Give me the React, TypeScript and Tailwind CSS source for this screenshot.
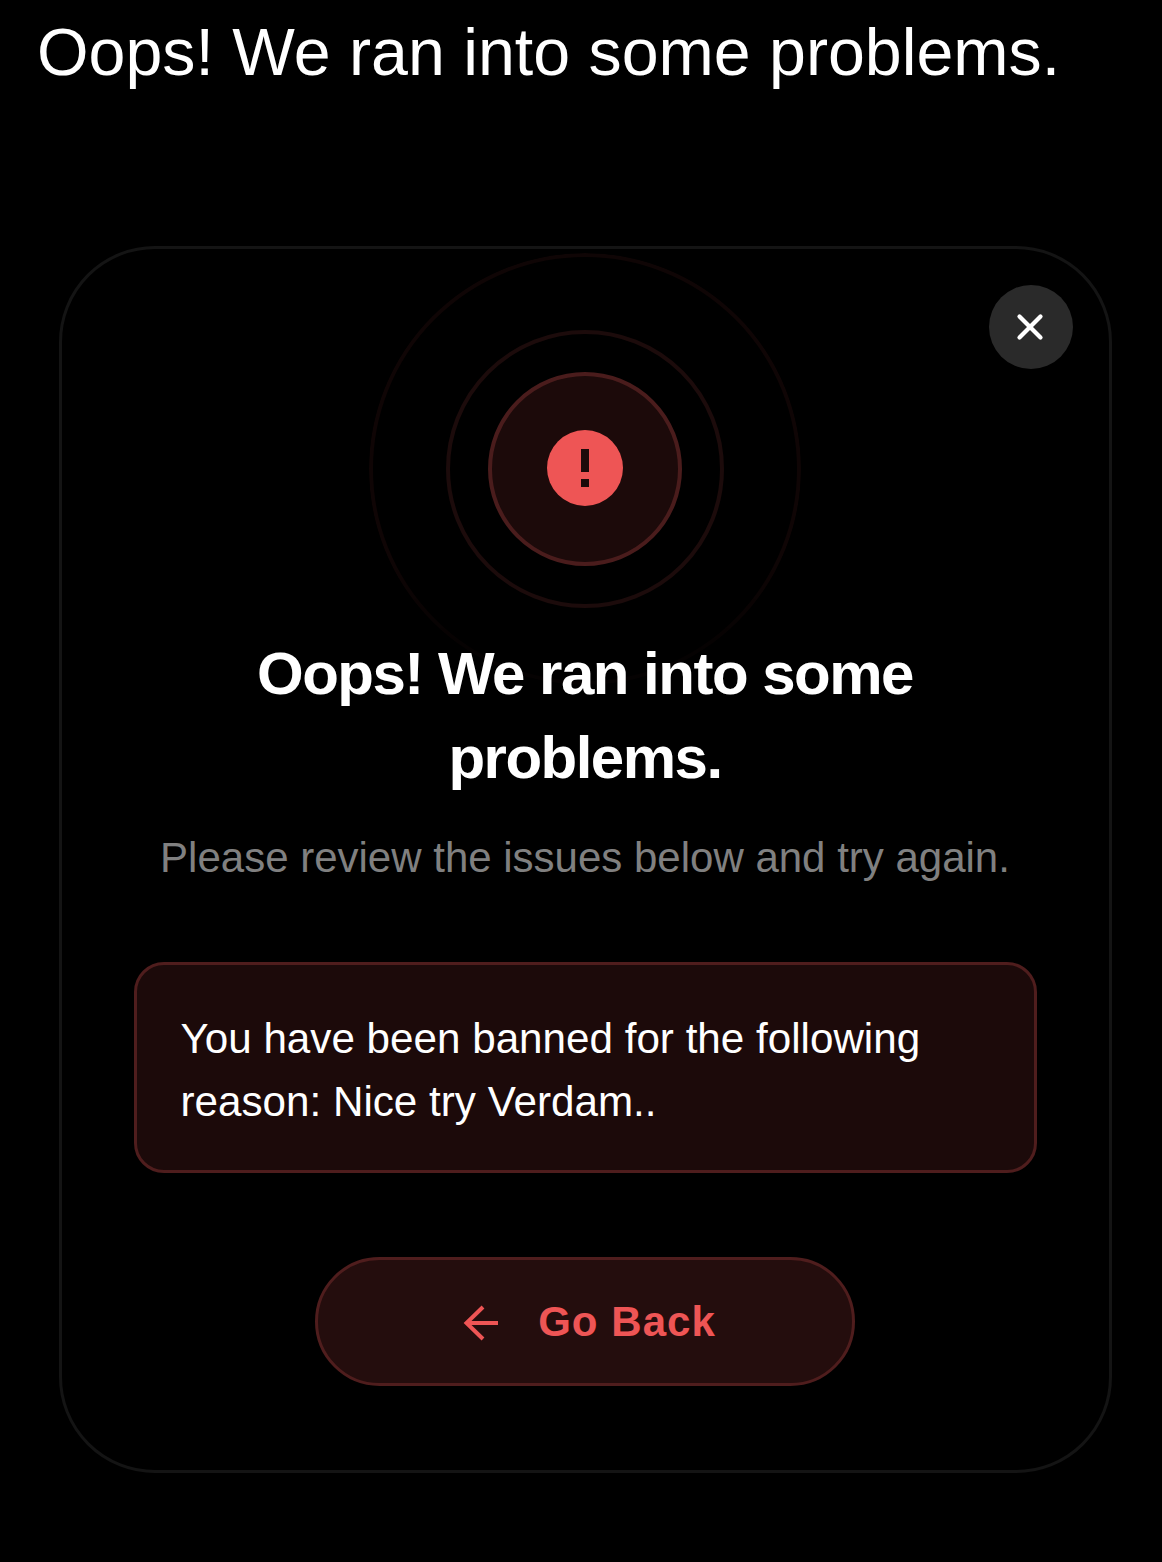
import { X } from "lucide-react";

export default function App() {
  return (
    <div className="min-h-[1562px] bg-black font-['Liberation_Sans',Arial,sans-serif] text-white">
      <h1 className="pl-[37px] pt-[14px] text-[66.3px] leading-[76px] font-normal">Oops! We ran into some problems.</h1>

      <div className="relative ml-[59px] mt-[156px] flex h-[1227px] w-[1053px] flex-col items-center overflow-hidden rounded-[96px] border-[3px] border-[#141414] pr-[1px]">
        <button className="absolute right-[36px] top-[36px] z-10 flex h-[84px] w-[84px] items-center justify-center rounded-full bg-[#2a2a2a] pr-[2px] text-white">
          <X size={42} strokeWidth={2.4} />
        </button>

        <div className="relative mt-[123px] flex h-[194px] w-[194px] items-center justify-center rounded-full border-[4px] border-[#4a1c1c] bg-[#1c0a0a]">
          <div className="absolute left-1/2 top-1/2 h-[278px] w-[278px] -translate-x-1/2 -translate-y-1/2 rounded-full border-[4px] border-[#1c0b0b]" />
          <div className="absolute left-1/2 top-1/2 h-[432px] w-[432px] -translate-x-1/2 -translate-y-1/2 rounded-full border-[4px] border-[#0f0505] [mask-image:linear-gradient(to_bottom,black_70%,rgba(0,0,0,0.35)_92%)]" />
          <svg width="76" height="76" viewBox="0 0 76 76" className="relative -mt-[2px]">
            <circle cx="38" cy="38" r="38" fill="#ee5555" />
            <rect x="34" y="19" width="8" height="23" fill="#1c0a0a" />
            <rect x="34" y="49" width="8" height="8" fill="#1c0a0a" />
          </svg>
        </div>

        <h2 className="relative mt-[66px] w-full text-center text-[60px] leading-[84px] font-bold tracking-tight">
          Oops! We ran into some
          <br />
          problems.
        </h2>
        <p className="mt-[28px] text-center text-[42px] leading-[60px] text-[#808080]">Please review the issues below and try again.</p>

        <div className="mt-[74px] h-[211px] w-[903px] rounded-[30px] border-[3px] border-[#4f1d1d] bg-[#1c0a0a] pl-[44px] pt-[42px] text-[42.2px] leading-[63px]">
          You have been banned for the following
          <br />
          reason: Nice try Verdam..
        </div>

        <button className="mt-[84px] flex h-[129px] w-[540px] items-center justify-center gap-[40px] rounded-full border-[3px] border-[#4f1d1d] bg-[#240d0d] pl-[8px] text-[42px] font-bold tracking-wide text-[#ee5555]">
          <svg width="36" height="36" viewBox="0 0 36 36" fill="none" stroke="currentColor" strokeWidth="4" className="mt-[3px]">
            <path d="M36 18H5" />
            <path d="M21 2L4.5 18L21 34" />
          </svg>
          Go Back
        </button>
      </div>
    </div>
  );
}
